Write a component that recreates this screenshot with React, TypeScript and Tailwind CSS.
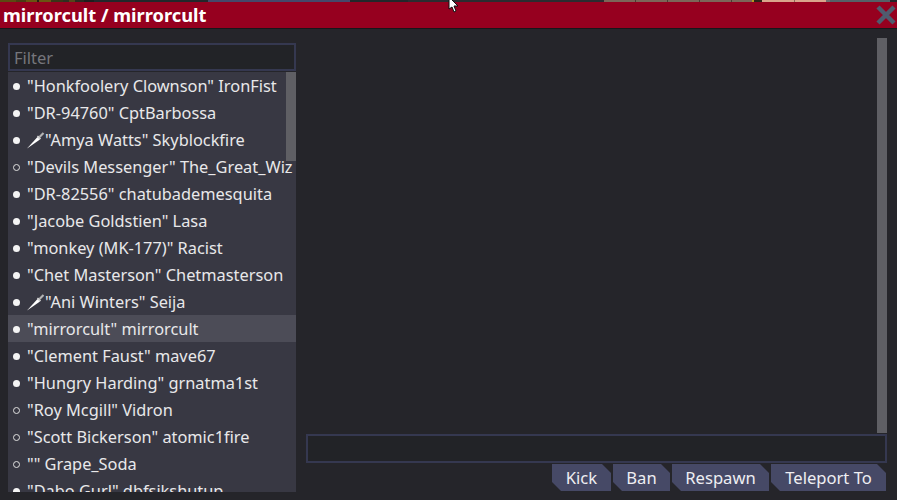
const players: [string, boolean, boolean][] = [
  ['"Honkfoolery Clownson" IronFist', true, false],
  ['"DR-94760" CptBarbossa', true, false],
  ['"Amya Watts" Skyblockfire', true, true],
  ['"Devils Messenger" The_Great_Wiz', false, false],
  ['"DR-82556" chatubademesquita', true, false],
  ['"Jacobe Goldstien" Lasa', true, false],
  ['"monkey (MK-177)" Racist', true, false],
  ['"Chet Masterson" Chetmasterson', true, false],
  ['"Ani Winters" Seija', true, true],
  ['"mirrorcult" mirrorcult', true, false],
  ['"Clement Faust" mave67', true, false],
  ['"Hungry Harding" grnatma1st', true, false],
  ['"Roy Mcgill" Vidron', false, false],
  ['"Scott Bickerson" atomic1fire', false, false],
  ['"" Grape_Soda', false, false],
  ['"Dabo Gurl" dbfsikshutup', true, false],
];

const strip: [number, string][] = [
  [16, '#5c4a12'], [10, '#4a3d14'], [11, '#6a5512'], [2, '#231f14'], [12, '#6a5512'], [12, '#3a3518'], [6, '#2f2f22'], [6, '#55461a'],
  [9, '#2a2a20'], [10, '#1e1e1e'], [114, '#23272b'], [142, '#45486a'], [58, '#23272b'], [196, '#2b2c30'],
  [31, '#7c6658'], [1, '#4a3d34'], [31, '#7c6658'], [1, '#4a3d34'], [31, '#7c6658'], [1, '#4a3d34'], [31, '#7c6658'], [1, '#4a3d34'], [20, '#7c6658'],
  [2, '#b89a20'], [8, '#2b2416'], [32, '#d9a58c'], [1, '#8a6a5a'], [31, '#d9a58c'], [4, '#6f6f6f'], [60, '#556067'],
];

function Knife() {
  return (
    <svg width="18" height="18" viewBox="0 0 18 18" className="shrink-0">
      <path d="M0 17.5 L10.5 6 L13 8.5 Z" fill="#ffffff" />
      <path d="M10.5 5 L13.5 8" stroke="#e4e4e4" strokeWidth="1.4" />
      <path d="M12.5 6 L16.5 2" stroke="#b4b4b4" strokeWidth="2.2" />
    </svg>
  );
}

function Action({ label, className }: { label: string; className: string }) {
  return (
    <div
      className={`h-[27px] flex items-center justify-center pt-[1px] bg-[#464966] text-[#eeeef2] text-[16.6px] [clip-path:polygon(0_0,calc(100%-9px)_0,100%_9px,100%_100%,9px_100%,0_calc(100%-9px))] ${className}`}
    >
      {label}
    </div>
  );
}

export default function App() {
  return (
    <div className="relative w-[897px] h-[500px] overflow-hidden bg-[#25252a] flex flex-col font-['Noto_Sans',sans-serif] text-[#e8e8ea]">
      <div className="flex h-[2px] shrink-0">
        {strip.map(([w, c], i) => (
          <div key={i} className="h-full shrink-0" style={{ width: w, backgroundColor: c }} />
        ))}
      </div>
      <div className="h-[26px] shrink-0 bg-[#96001f] flex items-center justify-between pl-[3px]">
        <span className="text-[18.3px] font-bold text-white leading-[26px]">mirrorcult / mirrorcult</span>
        <svg width="22" height="22" viewBox="0 0 22 22">
          <path d="M3 3 L19 19 M19 3 L3 19" stroke="#4f5b6e" strokeWidth="4.5" />
        </svg>
      </div>
      <div className="h-[1px] shrink-0 bg-[#17171a]" />
      <div className="flex-1 flex pl-2 pr-[10px] pt-[9px] pb-2 gap-[10px] min-h-0">
        <div className="w-[288px] shrink-0 flex flex-col gap-[1px] pt-[5px]">
          <div className="h-[28px] shrink-0 border-2 border-[#353850] bg-[#222327] flex items-center px-[4px] pt-[2px] text-[16.5px] text-[#76767c]">
            Filter
          </div>
          <div className="relative flex-1 overflow-hidden bg-[#383843]">
            {players.map(([name, online, knife], i) => (
              <div
                key={i}
                className={`h-[27px] flex items-center pl-[5px] whitespace-nowrap text-[16.35px] ${name === '"mirrorcult" mirrorcult' ? 'bg-[#4c4c57]' : ''}`}
              >
                <span
                  className={`w-[7px] h-[7px] rounded-full shrink-0 mr-[7px] translate-y-[1px] ${online ? 'bg-[#f4f4f4]' : 'border border-[#e0e0e0]'}`}
                />
                {knife && <Knife />}
                <span className="pt-[1px]">{name}</span>
              </div>
            ))}
            <div className="absolute right-0 top-0 w-[10px] h-[89px] bg-[#5f5f64]" />
          </div>
        </div>
        <div className="flex-1 flex flex-col min-w-0 pb-[1px]">
          <div className="flex-1 flex justify-end">
            <div className="w-[10px] h-[395px] bg-[#5f5f64]" />
          </div>
          <div className="h-[29px] shrink-0 border-2 border-[#353850] bg-[#222327]" />
          <div className="flex justify-end gap-[2px] mt-[1px] pr-[1px] shrink-0">
            <Action label="Kick" className="w-[59px]" />
            <Action label="Ban" className="w-[57px]" />
            <Action label="Respawn" className="w-[97px]" />
            <Action label="Teleport To" className="w-[115px]" />
          </div>
        </div>
      </div>
      <svg width="14" height="14" viewBox="0 0 14 14" className="absolute left-[448px] top-0">
        <path d="M1 -3 L1 9 L4 7 L6 12 L8 11 L6 6 L10 6 Z" fill="#fff" stroke="#111" strokeWidth="1" />
      </svg>
    </div>
  );
}
